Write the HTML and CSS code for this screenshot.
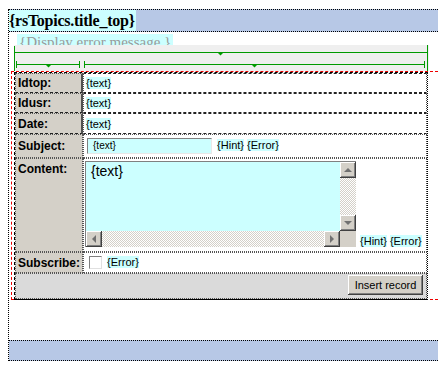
FILE: index.html
```html
<!DOCTYPE html>
<html lang="en">
<head>
    <meta charset="UTF-8">
    <title>rsTopics - Insert record</title>
<link rel="stylesheet" href="styles.css">
</head>
<body>
    <div class="page">
        <div class="title-band"><span class="title">{rsTopics.title_top}</span></div>

        <div class="error-msg"><span>{Display error message }</span></div>

        <!-- table width ruler -->
        <svg class="ruler" width="415" height="26" viewBox="0 0 415 26">
            <rect width="415" height="26" fill="#efefef"/>
            <g stroke="#009a00" stroke-width="1" fill="none">
                <line x1="0.5" y1="1" x2="0.5" y2="26"/>
                <line x1="413.5" y1="0" x2="413.5" y2="26"/>
                <line x1="0" y1="7.5" x2="414" y2="7.5"/>
                <line x1="2" y1="19.5" x2="65" y2="19.5"/>
                <line x1="70" y1="19.5" x2="411" y2="19.5"/>
                <line x1="2.5" y1="16" x2="2.5" y2="23"/>
                <line x1="65.5" y1="16" x2="65.5" y2="23"/>
                <line x1="70.5" y1="16" x2="70.5" y2="23"/>
                <line x1="410.5" y1="16" x2="410.5" y2="23"/>
            </g>
            <g fill="#009a00">
                <polygon points="203,7 210,7 206.5,10.5"/>
                <polygon points="31,19 38,19 34.5,22.5"/>
                <polygon points="237,19 244,19 240.5,22.5"/>
            </g>
        </svg>

        <form class="record-form">
            <table class="record-table">
                <tr class="ro">
                    <th>Idtop:</th>
                    <td><span class="tag">{text}</span></td>
                </tr>
                <tr class="ro">
                    <th>Idusr:</th>
                    <td><span class="tag">{text}</span></td>
                </tr>
                <tr class="ro ro-last">
                    <th>Date:</th>
                    <td><span class="tag">{text}</span></td>
                </tr>
                <tr class="subject-row">
                    <th>Subject:</th>
                    <td>
                        <span class="text-field">{text}</span>
                        <span class="tag">{Hint}</span> <span class="tag">{Error}</span>
                    </td>
                </tr>
                <tr class="content-row">
                    <th>Content:</th>
                    <td>
                        <div class="content-cell">
                            <div class="textarea">
                                <div class="textarea-text">{text}</div>
                                <div class="vscroll">
                                    <span class="sbtn"><i class="arrow up"></i></span>
                                    <span class="track"></span>
                                    <span class="sbtn"><i class="arrow down"></i></span>
                                </div>
                                <div class="hscroll">
                                    <span class="sbtn"><i class="arrow left"></i></span>
                                    <span class="track"></span>
                                    <span class="sbtn"><i class="arrow right"></i></span>
                                </div>
                                <div class="corner"></div>
                            </div>
                            <span class="tag">{Hint}</span> <span class="tag">{Error}</span>
                        </div>
                    </td>
                </tr>
                <tr class="subscribe-row">
                    <th>Subscribe:</th>
                    <td><span class="checkbox"></span> <span class="tag">{Error}</span></td>
                </tr>
                <tr class="actions">
                    <td colspan="2"><button type="button">Insert record</button></td>
                </tr>
            </table>
        </form>

        <div class="footer-band"></div>
    </div>
</body>
</html>
```

FILE: styles.css
```css
body {
    margin: 0;
    background-color: #fff;
    font-family: "Liberation Sans", Arial, sans-serif;
    color: #000;
    overflow: hidden;
}

.page {
    margin: 9px 0 0 8px;
    border-left: 1px dotted #000;
}

.title-band {
    height: 21px;
    background-color: #b7c8e6;
    border-top: 1px dotted #000;
    border-bottom: 1px dotted #000;
}

.title {
    display: inline-block;
    height: 21px;
    padding-right: 1px;
    line-height: 22px;
    background-color: #ccffff;
    font-family: "Liberation Serif", "Times New Roman", serif;
    font-weight: bold;
    font-size: 16px;
    letter-spacing: -0.25px;
}

.error-msg {
    height: 12px;
    margin: 1px 0 0 8px;
    overflow: hidden;
}

.error-msg span {
    display: inline-block;
    padding: 0 2px;
    line-height: 16px;
    background-color: #ccffff;
    font-family: "Liberation Serif", "Times New Roman", serif;
    font-size: 15px;
    color: #9a9a9a;
}

.ruler {
    display: block;
    margin-left: 5px;
}

/* form box */
.record-form {
    margin: 0 0 0 2px;
    padding-left: 2px;
    border-top: 1px dashed #e00;
    border-left: 1px dashed #e00;
    border-bottom: 1px dashed #e00;
}

.record-table {
    position: relative;
    width: 414px;
    margin-bottom: -1px;
    border-collapse: separate;
    border-spacing: 0;
    border: 1px dashed #000;
    border-bottom: 1px solid #000;
    border-right: 1px dotted #000;
    font-size: 11px;
}

.record-table th,
.record-table td {
    padding: 0 2px;
    border: 1px dotted #555;
    text-align: left;
    vertical-align: middle;
}

.record-table th {
    width: 60px;
    background-color: #d4d0c8;
    font-size: 12px;
    font-weight: bold;
}

.ro th,
.ro td {
    height: 18px;
}

.ro th {
    border-right: 2px solid #505050;
    border-bottom: 1px dashed #222;
}

.ro td {
    border-top: 1px dashed #222;
    border-bottom: 1px dashed #222;
}

.ro-last th,
.ro-last td {
    height: 19px;
}

.tag {
    background-color: #ccffff;
}

.subject-row th,
.subject-row td {
    height: 22px;
}

.text-field {
    display: inline-block;
    box-sizing: border-box;
    width: 125px;
    height: 16px;
    margin: 0 2px 0 1px;
    padding-left: 5px;
    line-height: 13px;
    font-size: 10px;
    background-color: #ccffff;
    border: 1px solid;
    border-color: #808080 #e8e8e8 #e8e8e8 #808080;
    vertical-align: middle;
}

.content-row th {
    vertical-align: top;
    padding-top: 3px;
}

.content-row td {
    padding: 2px 2px 4px 1px;
}

.content-cell {
    display: flex;
    align-items: flex-end;
    gap: 3px;
}

.content-cell .textarea {
    margin-right: 1px;
}

.textarea {
    display: grid;
    grid-template-columns: 254px 16px;
    grid-template-rows: 69px 16px;
    width: 270px;
    border-top: 1px solid #808080;
    border-left: 1px solid #808080;
}

.textarea-text {
    padding: 1px 5px;
    background-color: #ccffff;
    font-size: 14px;
}

.vscroll,
.hscroll {
    display: flex;
    background: repeating-conic-gradient(#d4d0c8 0 25%, #fff 0 50%) 0 0 / 2px 2px;
}

.vscroll {
    flex-direction: column;
}

.track {
    flex: 1;
}

.sbtn {
    display: flex;
    align-items: center;
    justify-content: center;
    width: 16px;
    height: 16px;
    background-color: #d4d0c8;
    box-shadow: inset -1px -1px #404040, inset 1px 1px #fff, inset -2px -2px #808080;
}

.corner {
    background-color: #d4d0c8;
}

.arrow {
    width: 0;
    height: 0;
    border: 4px solid transparent;
}

.arrow.up {
    border-bottom-color: #707070;
    border-top-width: 0;
}

.arrow.down {
    border-top-color: #707070;
    border-bottom-width: 0;
}

.arrow.left {
    border-right-color: #707070;
    border-left-width: 0;
}

.arrow.right {
    border-left-color: #707070;
    border-right-width: 0;
}

.subscribe-row th,
.subscribe-row td {
    height: 19px;
}

.checkbox {
    display: inline-block;
    box-sizing: border-box;
    width: 13px;
    height: 13px;
    margin: 0 2px 0 3px;
    vertical-align: middle;
    background-color: #fff;
    border: 1px solid;
    border-color: #808080 #e0e0e0 #e0e0e0 #808080;
}

.actions td {
    height: 23px;
    padding: 1px 3px 0 0;
    vertical-align: top;
    text-align: right;
    background-color: #dadada;
}

.actions button {
    width: 75px;
    height: 20px;
    padding: 0;
    border: none;
    background-color: #d4d0c8;
    box-shadow: inset -1px -1px #404040, inset 1px 1px #fff, inset -2px -2px #808080;
    font-family: "Liberation Sans", Arial, sans-serif;
    font-size: 11px;
    color: #000;
}

.footer-band {
    height: 19px;
    margin-top: 40px;
    background-color: #b7c8e6;
    border-top: 1px dotted #000;
    border-bottom: 1px dotted #000;
}
```
